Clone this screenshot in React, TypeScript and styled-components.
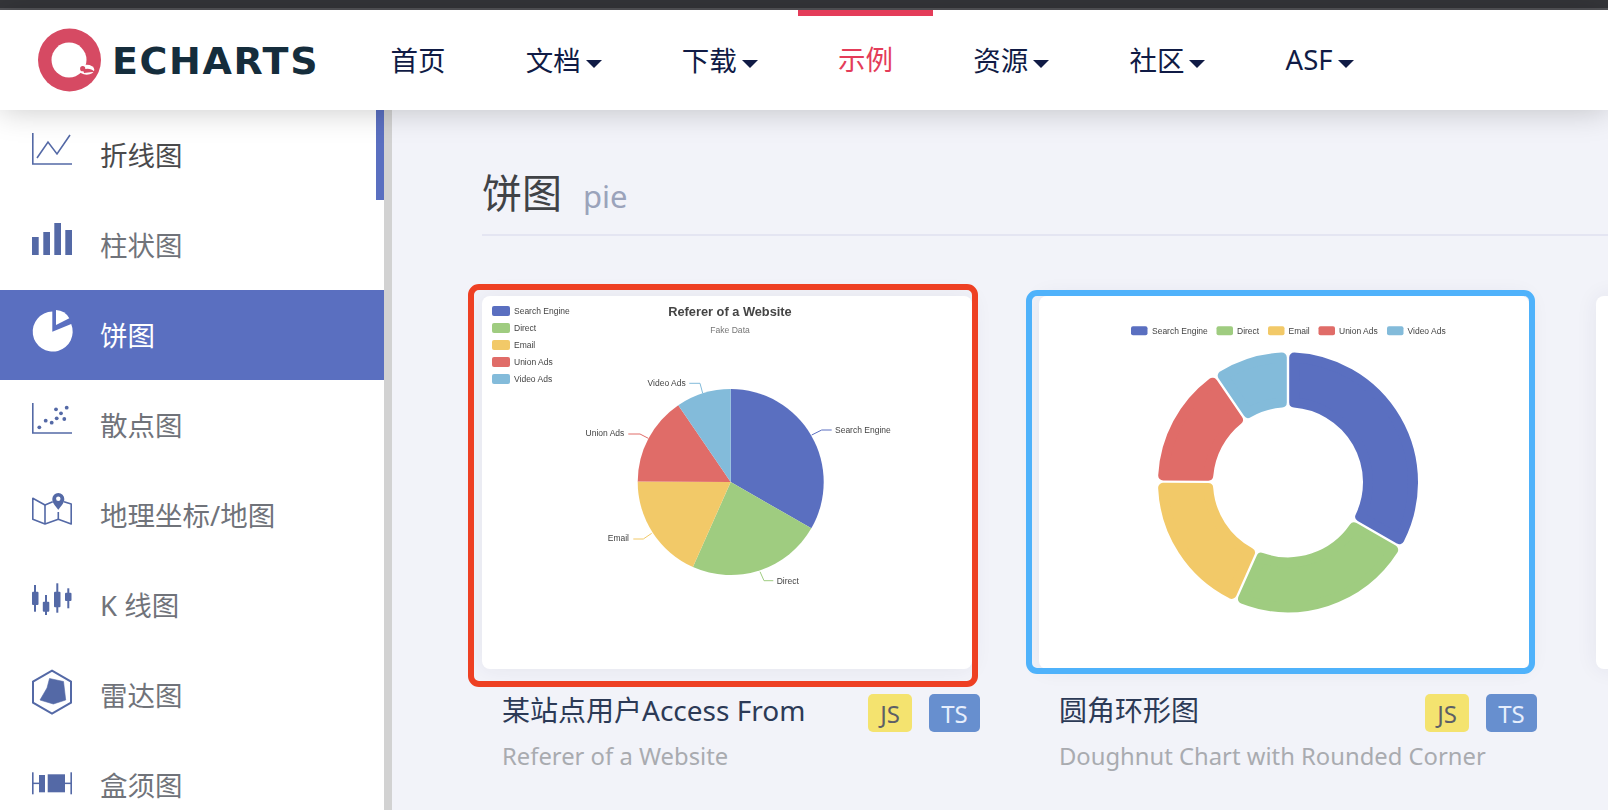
import React from 'react';
import styled, { createGlobalStyle } from 'styled-components';

const GlobalStyle = createGlobalStyle`
  html, body {
    margin: 0;
    padding: 0;
    height: 100%;
    overflow: hidden;
    background: #f2f3f9;
    font-family: 'Noto Sans', 'Noto Sans CJK SC', sans-serif;
  }
`;

const Page = styled.div`
  display: flex;
  flex-direction: column;
  height: 810px;
  overflow: hidden;
`;

const TopStrip = styled.div`
  height: 8px;
  background: #35363a;
  border-bottom: 2px solid #55565a;
  flex-shrink: 0;
`;

const Header = styled.header`
  position: relative;
  z-index: 2;
  display: flex;
  align-items: stretch;
  height: 100px;
  flex-shrink: 0;
  background: #fff;
  box-shadow: 0 0 30px rgba(0, 0, 0, 0.22);
`;

const Logo = styled.div`
  display: flex;
  align-items: center;
  width: 350.4px;
  flex-shrink: 0;
  padding-left: 38px;
  box-sizing: border-box;
`;

const LogoText = styled.span`
  margin-left: 11px;
  margin-top: 2px;
  font-family: 'DejaVu Sans', sans-serif;
  font-weight: 700;
  font-size: 38px;
  letter-spacing: 1.6px;
  line-height: 1;
  color: #152d3c;
`;

const NavItem = styled.div<{ $active?: boolean }>`
  position: relative;
  display: flex;
  align-items: center;
  padding: 0 40.1px;
  font-size: 27.5px;
  color: ${(p) => (p.$active ? '#e43c59' : '#101b45')};

  &::before {
    content: '';
    display: ${(p) => (p.$active ? 'block' : 'none')};
    position: absolute;
    left: 0;
    right: 0;
    top: 0;
    height: 6px;
    background: #e43c59;
  }
`;

const NavLabel = styled.span<{ $active?: boolean }>`
  margin-top: ${(p) => (p.$active ? '-5px' : '-2px')};
`;

const Caret = styled.i`
  width: 0;
  height: 0;
  margin-left: 5px;
  margin-top: 8px;
  border-left: 8px solid transparent;
  border-right: 8px solid transparent;
  border-top: 8px solid #101b45;
`;

const Body = styled.div`
  display: flex;
  flex: 1;
  min-height: 0;
`;

const Sidebar = styled.aside`
  position: relative;
  width: 384px;
  flex-shrink: 0;
  background: #fff;
  border-right: 8px solid #d2d2d2;
  overflow: hidden;

  &::after {
    content: '';
    position: absolute;
    right: 0;
    top: 0;
    width: 8px;
    height: 90px;
    background: #5a6fc0;
  }
`;

const Row = styled.div<{ $active?: boolean }>`
  display: flex;
  align-items: center;
  height: 90px;
  padding-left: 32px;
  background: ${(p) => (p.$active ? '#5a6fc0' : 'transparent')};
  color: ${(p) => (p.$active ? '#fff' : '#70737a')};
`;

const IconBox = styled.svg`
  display: block;
  width: 40px;
  height: 44px;
  margin-top: -10px;
  margin-right: 28px;
  flex-shrink: 0;
  overflow: visible;
`;

const RowLabel = styled.span<{ $dark?: boolean }>`
  margin-top: 1px;
  font-size: 27.5px;
  line-height: 36px;
  color: ${(p) => (p.$dark ? '#4a4a4c' : 'inherit')};
`;

const Main = styled.main`
  flex: 1;
  min-width: 0;
  padding-left: 90px;
  overflow: hidden;
  background: #f2f3f9;
`;

const TitleRow = styled.div`
  display: flex;
  align-items: baseline;
  gap: 21px;
  height: 126px;
  padding-top: 56px;
  box-sizing: border-box;
  border-bottom: 2px solid #e4e5f2;
`;

const Title = styled.h2`
  margin: 0;
  font-size: 40px;
  font-weight: 400;
  line-height: 54px;
  color: #404246;
`;

const TitleEn = styled.span`
  font-size: 31px;
  color: #9ba3bb;
`;

const Grid = styled.div`
  display: flex;
  gap: 67px;
  margin-top: 60px;
`;

const Card = styled.section`
  width: 490px;
  flex-shrink: 0;
`;

const Preview = styled.div`
  position: relative;
  height: 373px;
  background: #fff;
  border-radius: 8px;
  box-shadow: 0 0 22px rgba(40, 45, 90, 0.07);
`;

const Highlight = styled.div<{ $color: string; $inset: string }>`
  position: absolute;
  inset: ${(p) => p.$inset};
  border: 6px solid ${(p) => p.$color};
  border-radius: 11px;
  pointer-events: none;
`;

const ChartSvg = styled.svg`
  display: block;
  width: 490px;
  height: 373px;
  filter: blur(0.3px);
`;

const Caption = styled.div`
  display: flex;
  justify-content: space-between;
  align-items: flex-start;
  margin: 25px -8px 0 0;
  padding-left: 20px;
`;

const CardTitle = styled.div`
  font-size: 28px;
  line-height: 32px;
  color: #2c3a56;
`;

const Tags = styled.div`
  display: flex;
  gap: 17px;
`;

const Tag = styled.span<{ $ts?: boolean }>`
  display: flex;
  align-items: center;
  justify-content: center;
  width: ${(p) => (p.$ts ? '51px' : '44px')};
  height: 38px;
  border-radius: 5px;
  font-size: 24px;
  background: ${(p) => (p.$ts ? '#678fcf' : '#f4e36f')};
  color: ${(p) => (p.$ts ? '#e6eefc' : '#5d5f66')};
`;

const CardSub = styled.div`
  margin-top: 9px;
  padding-left: 20px;
  font-size: 23.8px;
  line-height: 30px;
  color: #a9abb0;
`;

const blue = '#5469a6';

const series = [
  { name: 'Search Engine', value: 1048, color: '#5a6fc0' },
  { name: 'Direct', value: 735, color: '#9fcc80' },
  { name: 'Email', value: 580, color: '#f2c968' },
  { name: 'Union Ads', value: 484, color: '#e06c68' },
  { name: 'Video Ads', value: 300, color: '#83bbda' },
];
const total = series.reduce((s, d) => s + d.value, 0);

// radians clockwise from 12 o'clock, like echarts startAngle 90
const polar = (cx: number, cy: number, r: number, a: number) =>
  `${(cx + r * Math.sin(a)).toFixed(2)} ${(cy - r * Math.cos(a)).toFixed(2)}`;

const slices = () => {
  let from = 0;
  return series.map((d) => {
    const to = from + (d.value / total) * Math.PI * 2;
    const s = { ...d, from, to };
    from = to;
    return s;
  });
};

const pieLabels = [
  { name: 'Search Engine', color: '#5a6fc0', line: 'M329.7 139 L339.7 134 H349.7', x: 353, y: 137.3, anchor: 'start' },
  { name: 'Direct', color: '#9fcc80', line: 'M278 275.7 L282 284.7 H291.3', x: 294.7, y: 288, anchor: 'start' },
  { name: 'Email', color: '#f2c968', line: 'M169.7 237.3 L161.3 243 H151.3', x: 147, y: 245.3, anchor: 'end' },
  { name: 'Union Ads', color: '#e06c68', line: 'M166.3 142.3 L158 138 H146.3', x: 142.3, y: 140, anchor: 'end' },
  { name: 'Video Ads', color: '#83bbda', line: 'M220.7 97.3 L218 87.3 H207.3', x: 203.7, y: 89.7, anchor: 'end' },
];

const PieChart: React.FC = () => {
  const cx = 248.7;
  const cy = 186;
  const r = 93;
  return (
    <ChartSvg viewBox="0 0 490 373" fontFamily="'Liberation Sans', sans-serif">
      {series.map((d, i) => (
        <g key={d.name}>
          <rect x={10} y={10 + i * 17} width={18} height={10} rx={2} fill={d.color} />
          <text x={32} y={18 + i * 17} fontSize={8.5} fill="#444">{d.name}</text>
        </g>
      ))}
      <text x={248} y={20} fontSize={12.8} fontWeight={700} fill="#444" textAnchor="middle">Referer of a Website</text>
      <text x={248} y={37} fontSize={8.6} fill="#777" textAnchor="middle">Fake Data</text>
      {slices().map((s) => (
        <path
          key={s.name}
          d={`M${cx} ${cy} L${polar(cx, cy, r, s.from)} A${r} ${r} 0 ${s.to - s.from > Math.PI ? 1 : 0} 1 ${polar(cx, cy, r, s.to)} Z`}
          fill={s.color}
        />
      ))}
      {pieLabels.map((l) => (
        <g key={l.name}>
          <path d={l.line} fill="none" stroke={l.color} strokeWidth={1} />
          <text x={l.x} y={l.y} fontSize={8.5} fill="#444" textAnchor={l.anchor as 'start' | 'end'}>{l.name}</text>
        </g>
      ))}
    </ChartSvg>
  );
};

const doughnutLegend = [
  { rect: 92, text: 113 },
  { rect: 177.5, text: 198 },
  { rect: 229, text: 249.5 },
  { rect: 279.5, text: 300 },
  { rect: 348, text: 368.5 },
];

// rounded ring slice: an inset sector with a thick round-joined stroke of the same colour
const ringSlice = (cx: number, cy: number, ri: number, ro: number, a0: number, a1: number) => {
  const rc = 5;
  const gap = 1.2;
  const o = ro - rc;
  const n = ri + rc;
  const dO = (rc + gap) / o;
  const dN = (rc + gap) / n;
  const large = a1 - a0 > Math.PI ? 1 : 0;
  return `M${polar(cx, cy, o, a0 + dO)} A${o} ${o} 0 ${large} 1 ${polar(cx, cy, o, a1 - dO)} L${polar(cx, cy, n, a1 - dN)} A${n} ${n} 0 ${large} 0 ${polar(cx, cy, n, a0 + dN)} Z`;
};

const DoughnutChart: React.FC = () => (
  <ChartSvg viewBox="0 0 490 373" fontFamily="'Liberation Sans', sans-serif">
    {series.map((d, i) => (
      <g key={d.name}>
        <rect x={doughnutLegend[i].rect} y={30.3} width={16.5} height={9} rx={2} fill={d.color} />
        <text x={doughnutLegend[i].text} y={37.7} fontSize={8.5} fill="#444">{d.name}</text>
      </g>
    ))}
    {slices().map((s) => (
      <path
        key={s.name}
        d={ringSlice(249, 186.3, 75, 130, s.from, s.to)}
        fill={s.color}
        stroke={s.color}
        strokeWidth={10}
        strokeLinejoin="round"
      />
    ))}
  </ChartSvg>
);

const LineIcon = () => (
  <IconBox viewBox="0 0 40 44" fill="none" stroke={blue} strokeWidth={1.6}>
    <path d="M.8 5V36H40" />
    <path d="M5 30L16 14L25 26L38 7" />
  </IconBox>
);

const BarIcon = () => (
  <IconBox viewBox="0 0 40 44" fill={blue}>
    <rect x={0} y={19} width={6.7} height={18} />
    <rect x={11.3} y={14} width={6.7} height={23} />
    <rect x={22.3} y={5} width={6.7} height={32} />
    <rect x={33.3} y={12} width={6.7} height={25} />
  </IconBox>
);

const PieIcon = () => (
  <IconBox viewBox="0 0 40 44" fill="#fff">
    <path d="M20.3 23.7V3.6A20 20 0 1 0 39.2 16Z" />
    <path d="M24 17V2A16 16 0 0 1 37.3 10.3Z" />
  </IconBox>
);

const ScatterIcon = () => (
  <IconBox viewBox="0 0 40 44" fill={blue}>
    <path d="M.8 5V35H40" fill="none" stroke={blue} strokeWidth={1.6} />
    {[[7.3, 29.3], [13.7, 22.7], [19.7, 24.7], [24.7, 20.3], [24, 11.3], [29, 15.3], [32.3, 21], [34.7, 9.7]].map(([x, y]) => (
      <circle key={`${x}-${y}`} cx={x} cy={y} r={1.9} />
    ))}
  </IconBox>
);

const MapIcon = () => (
  <IconBox viewBox="0 0 40 44" fill="none" stroke={blue} strokeWidth={1.6} strokeLinejoin="round">
    <path d="M20.7 13.7L13 17L.8 10.3V31.3L13 36L26.3 31.3L39.2 36V16L32 13.7" />
    <path d="M13 17V36M26.3 24V31.3" />
    <path d="M26.3 21.8C23 17.5 20.3 14.8 20.3 11A6 6 0 0 1 32.3 11C32.3 14.8 29.6 17.5 26.3 21.8Z" fill={blue} stroke="none" />
    <circle cx={26.3} cy={10.8} r={2.2} fill="#fff" stroke="none" />
  </IconBox>
);

const CandleIcon = () => (
  <IconBox viewBox="0 0 40 44" fill={blue}>
    <rect x={2} y={7} width={2} height={26.7} />
    <rect x={0} y={13.7} width={6.5} height={13.3} rx={1} />
    <rect x={13} y={17} width={2} height={20} />
    <rect x={10.8} y={23.7} width={6.5} height={10} rx={1} />
    <rect x={24.3} y={5.3} width={2} height={29.4} />
    <rect x={22} y={13.7} width={6.5} height={15.6} rx={1} />
    <rect x={35.3} y={10.3} width={2} height={20} />
    <rect x={33} y={14.7} width={6.5} height={8.3} rx={1} />
  </IconBox>
);

const RadarIcon = () => (
  <IconBox viewBox="0 0 40 44" fill="none">
    <path d="M20 2.7L39 13.7V34.7L20 45.7L1 34.7V13.7Z" stroke={blue} strokeWidth={2} />
    <path d="M17.5 10.5L31.5 13.5L33.7 32L21.3 36L8 32L15 20Z" fill={blue} stroke={blue} strokeWidth={0.6} />
  </IconBox>
);

const BoxIcon = () => (
  <IconBox viewBox="0 0 40 44" fill={blue}>
    <rect x={0} y={14.3} width={1.6} height={22} />
    <rect x={0} y={24.6} width={7} height={1.5} />
    <rect x={7} y={17} width={6} height={17.3} />
    <rect x={15.7} y={16.3} width={17.3} height={18} />
    <rect x={33} y={24.6} width={7} height={1.5} />
    <rect x={38.4} y={14.3} width={1.6} height={22} />
  </IconBox>
);

const navItems = [
  { label: '首页' },
  { label: '文档', caret: true },
  { label: '下载', caret: true },
  { label: '示例', active: true },
  { label: '资源', caret: true },
  { label: '社区', caret: true },
  { label: 'ASF', caret: true },
];

const menu = [
  { label: '折线图', Icon: LineIcon, dark: true },
  { label: '柱状图', Icon: BarIcon },
  { label: '饼图', Icon: PieIcon, active: true },
  { label: '散点图', Icon: ScatterIcon },
  { label: '地理坐标/地图', Icon: MapIcon },
  { label: 'K 线图', Icon: CandleIcon },
  { label: '雷达图', Icon: RadarIcon },
  { label: '盒须图', Icon: BoxIcon },
];

const App: React.FC = () => (
  <Page>
    <GlobalStyle />
    <TopStrip />
    <Header>
      <Logo>
        <svg width="63" height="66" viewBox="0 0 63 66">
          <circle cx="31.5" cy="33" r="31.5" fill="#d64a63" />
          <circle cx="31" cy="33" r="17.5" fill="#fff" />
          <ellipse cx="48.7" cy="42.7" rx="7.6" ry="5" fill="#fff" />
          <circle cx="44.7" cy="41.7" r="2.6" fill="#d64a63" />
          <path d="M45 42.5C49 41.5 53 41 57 45.2C53 44.6 49 45.8 46 46Z" fill="#d64a63" />
        </svg>
        <LogoText>ECHARTS</LogoText>
      </Logo>
      {navItems.map((item) => (
        <NavItem key={item.label} $active={item.active}>
          <NavLabel $active={item.active}>{item.label}</NavLabel>
          {item.caret && <Caret />}
        </NavItem>
      ))}
    </Header>
    <Body>
      <Sidebar>
        {menu.map(({ label, Icon, active, dark }) => (
          <Row key={label} $active={active}>
            <Icon />
            <RowLabel $dark={dark}>{label}</RowLabel>
          </Row>
        ))}
      </Sidebar>
      <Main>
        <TitleRow>
          <Title>饼图</Title>
          <TitleEn>pie</TitleEn>
        </TitleRow>
        <Grid>
          <Card>
            <Preview>
              <PieChart />
              <Highlight $color="#ee4023" $inset="-12px -6px -18px -14px" />
            </Preview>
            <Caption>
              <CardTitle>某站点用户Access From</CardTitle>
              <Tags>
                <Tag>JS</Tag>
                <Tag $ts>TS</Tag>
              </Tags>
            </Caption>
            <CardSub>Referer of a Website</CardSub>
          </Card>
          <Card>
            <Preview>
              <DoughnutChart />
              <Highlight $color="#4fb2fb" $inset="-6px -6px -5px -13px" />
            </Preview>
            <Caption>
              <CardTitle>圆角环形图</CardTitle>
              <Tags>
                <Tag>JS</Tag>
                <Tag $ts>TS</Tag>
              </Tags>
            </Caption>
            <CardSub>Doughnut Chart with Rounded Corner</CardSub>
          </Card>
          <Card>
            <Preview />
          </Card>
        </Grid>
      </Main>
    </Body>
  </Page>
);

export default App;
